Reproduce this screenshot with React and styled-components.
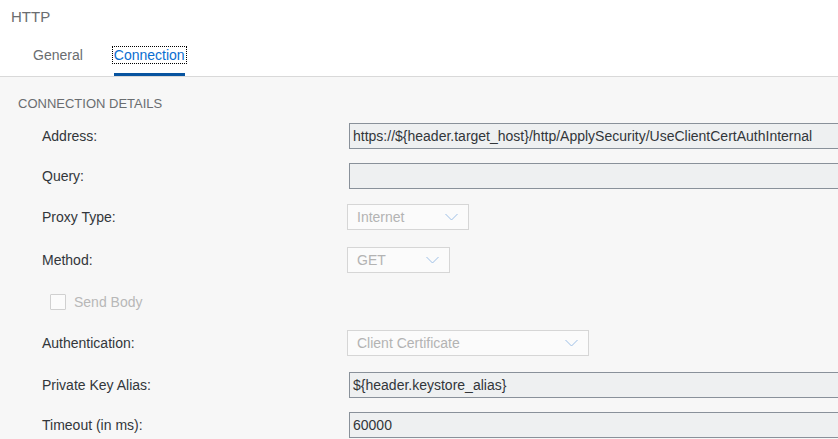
import React from "react";
import styled, { createGlobalStyle } from "styled-components";

const Global = createGlobalStyle`
  html, body { margin: 0; padding: 0; background: #f7f7f7; overflow: hidden; }
  body { font-family: "Liberation Sans", Arial, sans-serif; }
  * { box-sizing: border-box; }
`;

const Page = styled.div`
  width: 838px;
  height: 439px;
  display: flex;
  flex-direction: column;
  overflow: hidden;
  background: #f7f7f7;
`;

const Header = styled.header`
  background: #ffffff;
  border-bottom: 1px solid #d9d9d9;
  height: 77px;
  display: flex;
  flex-direction: column;
`;

const Title = styled.div`
  height: 36px;
  padding: 8px 11px 0;
  font-size: 15px;
  line-height: 18px;
  color: #6a6d70;
`;

const TabBar = styled.nav`
  height: 40px;
  display: flex;
  gap: 31px;
  padding-left: 33px;
`;

const Tab = styled.div`
  height: 40px;
  display: flex;
  align-items: center;
  padding-top: 1px;
  border-bottom: 3px solid ${(p) => (p.$active ? "#0854a0" : "transparent")};
  font-size: 14px;
  color: ${(p) => (p.$active ? "#0a6ed1" : "#6a6d70")};
`;

const TabLabel = styled.span`
  display: inline-block;
  line-height: 16px;
  padding: 0 1px;
  margin: 0 -1px;
  outline: ${(p) => (p.$focused ? "1px dotted #000" : "none")};
`;

const Content = styled.main`
  flex: 1;
  padding: 18px 0 0 0;
`;

const SectionTitle = styled.h2`
  margin: 0 0 2px 18px;
  font-size: 13px;
  font-weight: normal;
  line-height: 18px;
  color: #6a6d70;
  text-transform: uppercase;
`;

const Form = styled.div`
  display: flex;
  flex-direction: column;
  padding-left: 42px;
`;

const Row = styled.div`
  height: ${(p) => p.$h}px;
  display: flex;
  align-items: center;
`;

const Label = styled.label`
  width: 305px;
  flex: none;
  font-size: 14px;
  color: #32363a;
`;

const TextInput = styled.div`
  flex: none;
  width: 520px;
  height: 26px;
  margin-left: 2px;
  padding-left: 3px;
  display: flex;
  align-items: center;
  background: #eef0f1;
  border: 1px solid #89919a;
  font-size: 14px;
  color: #32363a;
  white-space: nowrap;
`;

const Select = styled.div`
  flex: none;
  width: ${(p) => p.$w}px;
  height: 26px;
  padding: 0 10px 0 9px;
  display: flex;
  align-items: center;
  justify-content: space-between;
  background: #fbfbfb;
  border: 1px solid #d6d6d6;
  font-size: 14px;
  color: #b3b3b3;
`;

const CheckWrap = styled.div`
  display: flex;
  align-items: center;
  gap: 8px;
  padding-left: 8px;
  font-size: 14px;
  color: #b8b8b8;
`;

const Box = styled.span`
  width: 16px;
  height: 16px;
  border: 1px solid #d0d0d0;
  border-radius: 1px;
  background: #fbfbfb;
`;

const Chevron = () => (
  <svg width="13" height="8" viewBox="0 0 13 8" fill="none">
    <path d="M0.5 1 L6.5 7 L12.5 1" stroke="#9dbfe6" strokeWidth="1" />
  </svg>
);

const SelectBox = ({ w, children }) => (
  <Select $w={w}>
    <span>{children}</span>
    <Chevron />
  </Select>
);

export default function App() {
  return (
    <Page>
      <Global />
      <Header>
        <Title>HTTP</Title>
        <TabBar>
          <Tab>
            <TabLabel>General</TabLabel>
          </Tab>
          <Tab $active>
            <TabLabel $focused>Connection</TabLabel>
          </Tab>
        </TabBar>
      </Header>
      <Content>
        <SectionTitle>Connection Details</SectionTitle>
        <Form>
          <Row $h={41}>
            <Label>Address:</Label>
            <TextInput>https://${"{"}header.target_host{"}"}/http/ApplySecurity/UseClientCertAuthInternal</TextInput>
          </Row>
          <Row $h={40}>
            <Label>Query:</Label>
            <TextInput />
          </Row>
          <Row $h={42}>
            <Label>Proxy Type:</Label>
            <SelectBox w={122}>Internet</SelectBox>
          </Row>
          <Row $h={43}>
            <Label>Method:</Label>
            <SelectBox w={103}>GET</SelectBox>
          </Row>
          <Row $h={41}>
            <CheckWrap>
              <Box />
              Send Body
            </CheckWrap>
          </Row>
          <Row $h={42}>
            <Label>Authentication:</Label>
            <SelectBox w={242}>Client Certificate</SelectBox>
          </Row>
          <Row $h={41}>
            <Label>Private Key Alias:</Label>
            <TextInput>${"{"}header.keystore_alias{"}"}</TextInput>
          </Row>
          <Row $h={40}>
            <Label>Timeout (in ms):</Label>
            <TextInput>60000</TextInput>
          </Row>
        </Form>
      </Content>
    </Page>
  );
}
